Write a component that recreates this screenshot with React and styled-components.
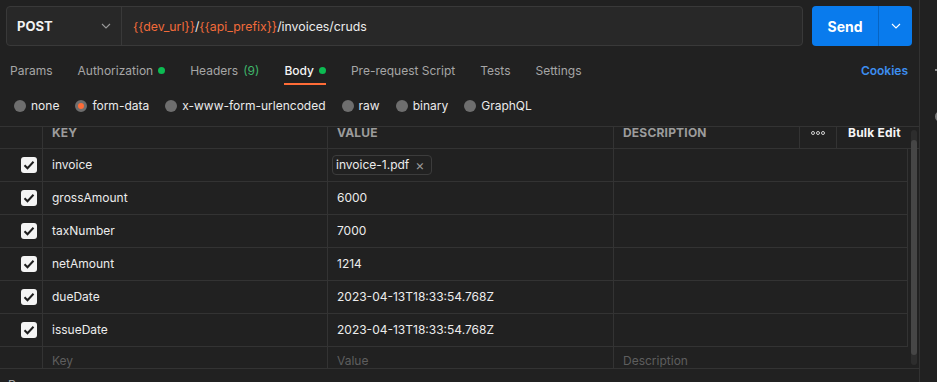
import styled, { createGlobalStyle } from "styled-components";

const GlobalStyle = createGlobalStyle`
  html, body {
    margin: 0;
    padding: 0;
    background: #212121;
  }
  body {
    font-family: Inter, "Noto Sans", sans-serif;
    font-size: 12px;
    color: #e8e8e8;
    -webkit-font-smoothing: antialiased;
  }
  * { box-sizing: border-box; }
`;

const tabs = [
  { label: "Params" },
  { label: "Authorization", dot: true },
  { label: "Headers", count: "(9)" },
  { label: "Body", dot: true, active: true },
  { label: "Pre-request Script" },
  { label: "Tests" },
  { label: "Settings" },
];

const bodyTypes = [
  { label: "none" },
  { label: "form-data", selected: true },
  { label: "x-www-form-urlencoded" },
  { label: "raw" },
  { label: "binary" },
  { label: "GraphQL" },
];

const rows = [
  { key: "invoice", file: "invoice-1.pdf" },
  { key: "grossAmount", value: "6000" },
  { key: "taxNumber", value: "7000" },
  { key: "netAmount", value: "1214" },
  { key: "dueDate", value: "2023-04-13T18:33:54.768Z" },
  { key: "issueDate", value: "2023-04-13T18:33:54.768Z" },
];

const Chevron = ({ color = "#9a9a9a" }) => (
  <svg width="10" height="6" viewBox="0 0 10 6" fill="none">
    <path d="M1 1l4 4 4-4" stroke={color} strokeWidth="1.1" />
  </svg>
);

const App = () => {
  return (
    <>
      <GlobalStyle />
      <Shell>
        <Main>
          <TopBar>
            <UrlGroup>
              <MethodBox>
                <Method>POST</Method>
                <Chevron />
              </MethodBox>
              <UrlText>
                <Var>{"{{dev_url}}"}</Var>/<Var>{"{{api_prefix}}"}</Var>/invoices/cruds
              </UrlText>
            </UrlGroup>
            <SendGroup>
              <SendLabel>Send</SendLabel>
              <SendMore>
                <Chevron color="#ffffff" />
              </SendMore>
            </SendGroup>
          </TopBar>

          <TabBar>
            <TabList>
              {tabs.map((t) => (
                <Tab key={t.label} $active={t.active}>
                  {t.label}
                  {t.count && <Count>{t.count}</Count>}
                  {t.dot && <Dot />}
                </Tab>
              ))}
            </TabList>
            <Cookies>Cookies</Cookies>
          </TabBar>

          <RadioRow>
            {bodyTypes.map((b) => (
              <RadioItem key={b.label}>
                <Radio $selected={b.selected} />
                {b.label}
              </RadioItem>
            ))}
          </RadioRow>

          <TableWrap>
            <HeaderRow>
              <HeadCell />
              <HeadCell $line>KEY</HeadCell>
              <HeadCell $line>VALUE</HeadCell>
              <HeadCell $line>DESCRIPTION</HeadCell>
              <HeadCell $line $center>
                <Dots>
                  <i />
                  <i />
                  <i />
                </Dots>
              </HeadCell>
              <HeadCell $line>
                <BulkEdit>Bulk Edit</BulkEdit>
              </HeadCell>
            </HeaderRow>
            <TableBody>
              {rows.map((r) => (
                <Row key={r.key} $framed>
                  <CheckCell>
                    <CheckBox>
                      <svg width="12" height="10" viewBox="0 0 12 10" fill="none">
                        <path d="M1.5 5.2l3 3L10.5 1.8" stroke="#1e1e1e" strokeWidth="2" />
                      </svg>
                    </CheckBox>
                  </CheckCell>
                  <Cell>{r.key}</Cell>
                  <Cell>
                    {r.file ? (
                      <FileChip>
                        {r.file}
                        <Close>×</Close>
                      </FileChip>
                    ) : (
                      r.value
                    )}
                  </Cell>
                  <Cell />
                </Row>
              ))}
              <Row>
                <CheckCell />
                <Cell $placeholder>Key</Cell>
                <Cell $placeholder>Value</Cell>
                <Cell $placeholder>Description</Cell>
              </Row>
            </TableBody>
            <ScrollTrack>
              <ScrollThumb />
            </ScrollTrack>
          </TableWrap>

          <ResponseTitle>Response</ResponseTitle>
        </Main>
        <Side>
          <SideMark />
          <SideCircle />
        </Side>
      </Shell>
    </>
  );
};

const Shell = styled.div`
  display: flex;
  height: 382px;
  overflow: hidden;
`;

const Main = styled.div`
  width: 920px;
  flex-shrink: 0;
  border-right: 1px solid #323232;
  display: flex;
  flex-direction: column;
  & > * {
    flex-shrink: 0;
  }
`;

const Side = styled.div`
  flex: 1;
  position: relative;
  overflow: hidden;
`;

const SideMark = styled.div`
  position: absolute;
  left: 15px;
  top: 69px;
  width: 4px;
  height: 2px;
  background: #8a8a8a;
`;

const SideCircle = styled.div`
  position: absolute;
  left: 15px;
  top: 111px;
  width: 11px;
  height: 11px;
  border-radius: 50%;
  background: #7a7a7a;
`;

const TopBar = styled.div`
  display: flex;
  gap: 9px;
  padding: 6px 7px 0 6px;
  height: 46px;
`;

const UrlGroup = styled.div`
  flex: 1;
  display: flex;
  align-items: stretch;
  height: 40px;
  background: #282828;
  border: 1px solid #393939;
  border-radius: 4px;
`;

const MethodBox = styled.div`
  width: 115px;
  display: flex;
  align-items: center;
  justify-content: space-between;
  padding: 0 10px 0 10px;
  border-right: 1px solid #393939;
`;

const Method = styled.span`
  font-weight: 700;
  font-size: 13px;
  color: #f2f2f2;
`;

const UrlText = styled.div`
  display: flex;
  align-items: center;
  padding-left: 11px;
  font-size: 12.3px;
  color: #ededed;
`;

const Var = styled.span`
  color: #f26b3a;
`;

const SendGroup = styled.div`
  width: 100px;
  height: 40px;
  display: flex;
  background: #097bed;
  border-radius: 4px;
`;

const SendLabel = styled.div`
  width: 67px;
  display: flex;
  align-items: center;
  justify-content: center;
  font-weight: 700;
  font-size: 14px;
  color: #ffffff;
  border-right: 1px solid rgba(0, 0, 0, 0.18);
`;

const SendMore = styled.div`
  flex: 1;
  display: flex;
  align-items: center;
  justify-content: center;
`;

const TabBar = styled.div`
  display: flex;
  justify-content: space-between;
  align-items: stretch;
  height: 39px;
  padding: 12px 11px 0 10px;
`;

const TabList = styled.div`
  display: flex;
  gap: 25px;
`;

const Tab = styled.div`
  display: flex;
  align-items: center;
  gap: 5px;
  padding-bottom: 1px;
  font-size: 12px;
  color: ${(p) => (p.$active ? "#f5f5f5" : "#a6a6a6")};
  font-weight: ${(p) => (p.$active ? 500 : 400)};
  border-bottom: 2px solid ${(p) => (p.$active ? "#ff6c37" : "transparent")};
`;

const Count = styled.span`
  color: #3fb46a;
`;

const Dot = styled.span`
  width: 7px;
  height: 7px;
  border-radius: 50%;
  background: #0cbb52;
`;

const Cookies = styled.div`
  display: flex;
  align-items: center;
  padding-bottom: 3px;
  font-size: 12px;
  font-weight: 600;
  color: #3d8ef0;
`;

const RadioRow = styled.div`
  display: flex;
  align-items: center;
  gap: 16px;
  height: 41px;
  padding-left: 14px;
`;

const RadioItem = styled.div`
  display: flex;
  align-items: center;
  gap: 5px;
  font-size: 12px;
  color: #ebebeb;
`;

const Radio = styled.span`
  flex-shrink: 0;
  width: 12px;
  height: 12px;
  border-radius: 50%;
  background: ${(p) => (p.$selected ? "#ff6c37" : "#6e6e6e")};
  border: ${(p) => (p.$selected ? "3px solid #6e6e6e" : "none")};
`;

const TableWrap = styled.div`
  position: relative;
  border-top: 1px solid #333333;
  border-bottom: 1px solid #333333;
`;

const HeaderRow = styled.div`
  display: grid;
  grid-template-columns: 42px 285px 286px 186px 37px 1fr;
  height: 22px;
  border-bottom: 1px solid #333333;
`;

const HeadCell = styled.div`
  display: flex;
  align-items: flex-start;
  justify-content: ${(p) => (p.$center ? "center" : "flex-start")};
  padding: 0 ${(p) => (p.$center ? 0 : 9)}px;
  border-left: ${(p) => (p.$line ? "1px solid #333333" : "none")};
  font-size: 12px;
  font-weight: 700;
  line-height: 12px;
  letter-spacing: 0.2px;
  color: #9c9c9c;
`;

const Dots = styled.div`
  display: flex;
  gap: 1px;
  margin-top: 4px;
  i {
    width: 4px;
    height: 4px;
    border-radius: 50%;
    border: 1px solid #d0d0d0;
  }
`;

const BulkEdit = styled.span`
  color: #f5f5f5;
  padding-left: 2px;
`;

const TableBody = styled.div`
  height: 219px;
  overflow: hidden;
`;

const Row = styled.div`
  display: grid;
  grid-template-columns: 42px 285px 286px 294px;
  width: 908px;
  height: 33px;
  border-bottom: 1px solid #333333;
  border-right: 1px solid ${(p) => (p.$framed ? "#333333" : "transparent")};
`;

const CheckCell = styled.div`
  display: flex;
  align-items: center;
  padding-left: 21px;
`;

const CheckBox = styled.span`
  width: 16px;
  height: 16px;
  border-radius: 3px;
  background: #f4f4f4;
  display: flex;
  align-items: center;
  justify-content: center;
`;

const Cell = styled.div`
  display: flex;
  align-items: ${(p) => (p.$placeholder ? "flex-start" : "center")};
  padding: ${(p) => (p.$placeholder ? "7px 0 0 9px" : "0 0 0 9px")};
  line-height: 14px;
  border-left: 1px solid #333333;
  font-size: 12px;
  color: ${(p) => (p.$placeholder ? "#5e5e5e" : "#ececec")};
`;

const FileChip = styled.span`
  display: inline-flex;
  align-items: center;
  gap: 6px;
  height: 20px;
  margin-left: -5px;
  padding: 0 6px 0 3px;
  border: 1px solid #3c3c3c;
  border-radius: 4px;
  font-size: 12px;
  color: #ececec;
`;

const Close = styled.span`
  font-size: 14px;
  color: #9a9a9a;
`;

const ScrollTrack = styled.div`
  position: absolute;
  right: 2px;
  top: 3px;
  width: 6px;
  height: 235px;
  border-radius: 3px;
  background: #2d2d2d;
  padding-top: 10px;
`;

const ScrollThumb = styled.div`
  height: 215px;
  border-radius: 3px;
  background: #464646;
`;

const ResponseTitle = styled.div`
  padding: 8px 0 0 8px;
  font-size: 12px;
  color: #a6a6a6;
`;

export default App;
